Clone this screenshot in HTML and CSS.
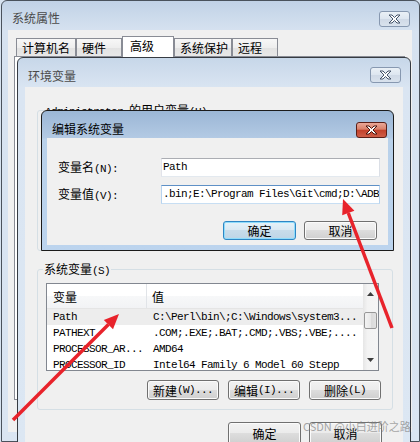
FILE: index.html
```html
<!DOCTYPE html>
<html lang="zh-CN">
<head>
<meta charset="utf-8">
<title>环境变量</title>
<link rel="stylesheet" href="styles.css">
</head>
<body>
<div class="screen">
  <div class="win sys">
    <div class="titlebar">
      <span class="title">系统属性</span>
      <span class="close close-inactive"><svg width="13" height="10" viewBox="0 0 13 10"><path d="M1 1h3l2.5 2.5L9 1h3L8 5l4 4H9L6.5 6.5L4 9H1l4-4z" fill="#fff" stroke="#46556b" stroke-width="1" stroke-linejoin="round"/></svg></span>
    </div>
    <div class="sys-client">
      <div class="tabs">
        <div class="tab w1">计算机名</div>
        <div class="tab w2">硬件</div>
        <div class="tab w3 sel">高级</div>
        <div class="tab w4">系统保护</div>
        <div class="tab w5">远程</div>
      </div>
      <div class="tabpanel"></div>
    </div>
  </div>

  <div class="win env">
    <div class="titlebar">
      <span class="title">环境变量</span>
      <span class="close close-inactive"><svg width="13" height="10" viewBox="0 0 13 10"><path d="M1 1h3l2.5 2.5L9 1h3L8 5l4 4H9L6.5 6.5L4 9H1l4-4z" fill="#fff" stroke="#46556b" stroke-width="1" stroke-linejoin="round"/></svg></span>
    </div>
    <div class="env-client">
      <div class="group">
        <div class="legend user-legend"><span class="a">Administrator </span>的用户变量<span class="a">(U)</span></div>
      </div>
      <div class="group">
        <div class="legend"><span>系统变量</span><span class="a">(S)</span></div>
        <div class="lv">
          <div class="lv-main">
            <div class="lv-head">
              <div class="c1">变量</div>
              <div class="c2">值</div>
            </div>
            <div class="lv-row sel a"><div class="c1">Path</div><div class="c2">C:\Perl\bin\;C:\Windows\system3...</div></div>
            <div class="lv-row a"><div class="c1">PATHEXT</div><div class="c2">.COM;.EXE;.BAT;.CMD;.VBS;.VBE;....</div></div>
            <div class="lv-row a"><div class="c1">PROCESSOR_AR...</div><div class="c2">AMD64</div></div>
            <div class="lv-row a"><div class="c1">PROCESSOR_ID</div><div class="c2">Intel64 Family 6 Model 60 Stepp</div></div>
          </div>
          <div class="scroll">
            <div class="sb-btn"><svg width="7" height="4" viewBox="0 0 7 4"><path d="M0 4L3.5 0L7 4z" fill="#3c3c3c"/></svg></div>
            <div class="thumb"></div>
            <div class="sb-fill"></div>
            <div class="sb-btn"><svg width="7" height="4" viewBox="0 0 7 4"><path d="M0 0L3.5 4L7 0z" fill="#3c3c3c"/></svg></div>
          </div>
        </div>
        <div class="grp-btns">
          <div class="btn gb">新建<span class="a">(W)...</span></div>
          <div class="btn gb">编辑<span class="a">(I)...</span></div>
          <div class="btn gb">删除<span class="a">(L)</span></div>
        </div>
      </div>
      <div class="dlg-btns">
        <div class="btn db">确定</div>
        <div class="btn db">取消</div>
      </div>
    </div>
  </div>

  <div class="win edit">
    <div class="titlebar">
      <span class="title">编辑系统变量</span>
      <span class="close close-active"><svg width="13" height="10" viewBox="0 0 13 10"><path d="M1 1h3l2.5 2.5L9 1h3L8 5l4 4H9L6.5 6.5L4 9H1l4-4z" fill="#fff" stroke="#4a140c" stroke-width="1" stroke-linejoin="round"/></svg></span>
    </div>
    <div class="edit-client">
      <div class="lbl">变量名<span class="a">(N):</span></div>
      <div class="input a">Path</div>
      <div class="lbl">变量值<span class="a">(V):</span></div>
      <div class="input focus a">.bin;E:\Program Files\Git\cmd;D:\ADB</div>
      <div class="btnrow">
        <div class="btn eb default">确定</div>
        <div class="btn eb">取消</div>
      </div>
    </div>
  </div>

  <svg class="arrows" width="420" height="442" viewBox="0 0 420 442">
    <line x1="392" y1="328" x2="348.3" y2="213" stroke="#e8232b" stroke-width="3.5"/>
    <polygon points="343,199 354.4,210.7 342.2,215.3" fill="#e8232b"/>
    <line x1="13" y1="420" x2="108.4" y2="324.6" stroke="#e8232b" stroke-width="3.5"/>
    <polygon points="119,314 113,329.2 103.8,320" fill="#e8232b"/>
  </svg>
  <div class="watermark">CSDN @小白进阶之路</div>
</div>
</body>
</html>
```
FILE: styles.css
```css
* { box-sizing: border-box; }
html, body { margin: 0; padding: 0; }
body {
  width: 420px;
  height: 442px;
  overflow: hidden;
  background: #d6e2ef;
  font-family: "Noto Sans CJK SC", "Noto Sans", sans-serif;
  font-size: 12px;
  color: #000;
}
.screen { position: relative; width: 420px; height: 442px; overflow: hidden; }
.a {
  font-family: "Liberation Mono", "DejaVu Sans Mono", monospace;
  font-size: 11px;
  letter-spacing: -0.6px;
}

/* windows */
.win {
  display: flex;
  flex-direction: column;
  border: 1px solid #3a3f47;
  border-radius: 6px 6px 0 0;
}
.titlebar {
  display: flex;
  justify-content: space-between;
  align-items: flex-start;
  flex: none;
}
.title { line-height: 14px; white-space: nowrap; }
.close {
  display: flex;
  align-items: center;
  justify-content: center;
  width: 31px;
  height: 16px;
  border-radius: 3px;
  flex: none;
}
.close-inactive {
  border: 1px solid #8798b0;
  background: linear-gradient(#eaf0f6, #dde6f0 50%, #cfd9e6 50%, #d9e2ed);
}
.close-active {
  border: 1px solid #5b1f17;
  background: linear-gradient(#eaa898, #d98069 45%, #c2402a 50%, #cf5e48 100%);
}

/* system properties window */
.sys {
  margin-left: 1px;
  width: 419px;
  height: 442px;
  padding: 0 7px 9px 6px;
  border-color: #4a525c;
  background: linear-gradient(#c1d2e6, #d6e2f0 30px, #dae5f2);
}
.sys > .titlebar {
  height: 29px;
  margin: 0 -7px 0 -6px;
  padding: 10px 9px 0 10px;
  color: #4a4a4a;
}
.sys-client {
  flex: 1;
  background: #f0f0f0;
  padding: 6px 0 0 6px;
}
.tabs {
  display: flex;
  align-items: flex-end;
  height: 20px;
  margin-left: 2px;
}
.tab {
  height: 18px;
  border: 1px solid #898c95;
  border-bottom: none;
  padding: 1px 0 0 5px;
  line-height: 16px;
  white-space: nowrap;
  background: linear-gradient(#f7f7f7, #eeeeee 50%, #e2e2e2 50%, #e8e8e8);
}
.tab.sel {
  height: 21px;
  margin-bottom: -1px;
  position: relative;
  z-index: 1;
  background: #fff;
  padding: 1px 0 0 7px;
}
.w1 { width: 60px; }
.w2 { width: 46px; }
.w3 { width: 52px; }
.w4 { width: 58px; }
.w5 { width: 46px; }
.tabpanel {
  width: 391px;
  height: 344px;
  border: 1px solid #898c95;
  background: #fff;
}

/* environment variables window */
.env {
  position: absolute;
  left: 17px;
  top: 57px;
  width: 394px;
  height: 400px;
  padding: 0 7px;
  border-color: #363b42;
  background: linear-gradient(#c7d7e9, #dae5f2 30px, #dce7f3);
}
.env > .titlebar {
  height: 29px;
  margin: 0 -7px;
  padding: 11px 9px 0 10px;
  color: #4a4a4a;
}
.env > .titlebar .close { margin-top: -2px; }
.env-client {
  flex: 1;
  background: #f0f0f0;
  padding: 23px 10px 0 12px;
  display: flex;
  flex-direction: column;
}
.group {
  height: 141px;
  flex: none;
  border: 1px solid #d5dfe5;
  border-radius: 3px;
  display: flex;
  flex-direction: column;
}
.group + .group { margin-top: 18px; }
.legend {
  align-self: flex-start;
  margin: -8px 0 0 5px;
  padding: 0 1px;
  background: #f0f0f0;
  line-height: 14px;
  white-space: nowrap;
}
.user-legend { margin-left: 6px; }

/* list view */
.lv {
  display: flex;
  width: 333px;
  height: 88px;
  margin: 5px 0 0 8px;
  border: 1px solid #828790;
  background: #fff;
  overflow: hidden;
  flex: none;
}
.lv-main {
  flex: 1;
  display: flex;
  flex-direction: column;
  overflow: hidden;
}
.lv-head {
  display: flex;
  flex: none;
  height: 25px;
  border-bottom: 1px solid #e5e5e5;
  background: linear-gradient(#ffffff, #ffffff 50%, #f7f8f9 50%, #f2f3f5);
}
.lv-head .c1 {
  width: 100px;
  border-right: 1px solid #e1e4e8;
  padding: 2px 0 0 6px;
  line-height: 22px;
}
.lv-head .c2 {
  padding: 2px 0 0 5px;
  line-height: 22px;
}
.lv-row {
  display: flex;
  flex: none;
  height: 16px;
  line-height: 16px;
  white-space: nowrap;
}
.lv-row.sel { background: #ededed; }
.lv-row .c1 { width: 100px; padding-left: 6px; overflow: hidden; }
.lv-row .c2 { padding-left: 6px; }
.scroll {
  width: 15px;
  flex: none;
  display: flex;
  flex-direction: column;
  align-items: center;
  background: linear-gradient(90deg, #e6e6e6, #f3f3f3 30%, #f5f5f5);
}
.sb-btn {
  height: 20px;
  width: 100%;
  display: flex;
  align-items: center;
  justify-content: center;
  flex: none;
}
.thumb {
  width: 13px;
  height: 17px;
  margin-top: 8px;
  border: 1px solid #979797;
  border-radius: 2px;
  background: linear-gradient(90deg, #f3f3f3, #e8e8e8 50%, #d9d9d9 50%, #e2e2e2);
  flex: none;
}
.sb-fill { flex: 1; }

/* buttons */
.btn {
  display: flex;
  align-items: center;
  justify-content: center;
  border: 1px solid #707070;
  border-radius: 3px;
  box-shadow: inset 0 0 0 1px #fbfbfb;
  background: linear-gradient(#f2f2f2, #ebebeb 50%, #dddddd 50%, #cfcfcf);
  white-space: nowrap;
  flex: none;
}
.btn.default {
  border-color: #2e86c4;
  box-shadow: inset 0 0 0 1px #8fdcfb;
  background: linear-gradient(#e6f2f9, #d8e8f2 50%, #c8dcea 50%, #bed5e6);
}
.grp-btns {
  display: flex;
  justify-content: flex-end;
  gap: 9px;
  margin-top: 9px;
  padding-right: 11px;
}
.gb { width: 72px; height: 20px; }
.dlg-btns {
  display: flex;
  justify-content: flex-end;
  gap: 8px;
  margin-top: 12px;
  padding-right: 11px;
}
.db { width: 73px; height: 23px; }

/* edit dialog */
.edit {
  position: absolute;
  left: 41px;
  top: 110px;
  width: 353px;
  height: 141px;
  padding: 0 5px 5px;
  border-color: #1b1b1b;
  background: linear-gradient(#9bb6d5, #b3cae4 27px, #b9d1ea 28px, #bcd4ee);
}
.edit > .titlebar {
  height: 27px;
  margin: 0 -5px;
  padding: 11px 6px 0 10px;
}
.edit-client {
  flex: 1;
  background: #f0f0f0;
  padding: 20px 8px 0 11px;
  display: grid;
  grid-template-columns: 103px 219px;
  grid-template-rows: 19px 19px auto;
  row-gap: 8px;
  align-items: center;
}
.lbl { line-height: 14px; white-space: nowrap; }
.input {
  height: 19px;
  border: 1px solid;
  border-color: #abadb3 #dbdfe6 #e3e9ef #e2e3ea;
  background: #fff;
  padding: 0 1px;
  line-height: 17px;
  white-space: nowrap;
  overflow: hidden;
}
.input.focus { border-color: #5e90c6 #b7d3ef #c7def3 #b7d3ef; }
.btnrow {
  grid-column: 1 / -1;
  display: flex;
  justify-content: flex-end;
  gap: 8px;
  margin: 4px 3px 0 0;
}
.eb { width: 73px; height: 19px; }

/* overlays */
.arrows {
  position: absolute;
  left: 0;
  top: 0;
  pointer-events: none;
}
.watermark {
  position: absolute;
  left: 303px;
  top: 419px;
  font-size: 11px;
  line-height: 15px;
  color: rgba(130, 130, 130, 0.7);
  white-space: nowrap;
}
```
